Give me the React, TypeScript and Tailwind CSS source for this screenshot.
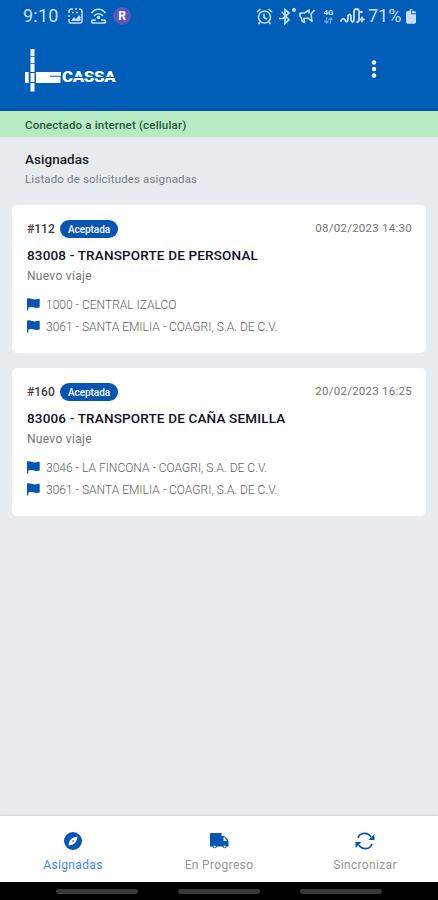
import React from 'react';

type Request = {
  id: string;
  date: string;
  title: string;
  stops: string[];
};

const requests: Request[] = [
  {
    id: '#112',
    date: '08/02/2023 14:30',
    title: '83008 - TRANSPORTE DE PERSONAL',
    stops: ['1000 - CENTRAL IZALCO', '3061 - SANTA EMILIA - COAGRI, S.A. DE C.V.'],
  },
  {
    id: '#160',
    date: '20/02/2023 16:25',
    title: '83006 - TRANSPORTE DE CAÑA SEMILLA',
    stops: ['3046 - LA FINCONA - COAGRI, S.A. DE C.V.', '3061 - SANTA EMILIA - COAGRI, S.A. DE C.V.'],
  },
];

function StatusBar() {
  return (
    <div className="flex h-8 items-center pl-[23px] pr-[22px] text-[#c9defa]">
      <span className="w-[37px] whitespace-nowrap text-[18px] leading-8 tracking-[0.2px]">9:10</span>
      <svg className="ml-2" width="15" height="16" viewBox="0 0 15 16" fill="none" stroke="currentColor" strokeWidth="1.5">
        <path d="M1 5V3.500C1 2 2 1 3.500 1H5M7 1h2M11 1c2 0 3 1 3 3v9c0 1-1 2-2 2H3c-1 0-2-1-2-2v-2M1 7v2" />
        <path d="M3 13l3-4 2 2 3-4 1.500 2V13z" fill="currentColor" stroke="none" />
        <path d="M4 4.500h2M8 4.500h2" />
      </svg>
      <svg className="ml-[7px]" width="17" height="16" viewBox="0 0 17 16" fill="none" stroke="currentColor" strokeWidth="1.700">
        <path d="M1.500 5c4-5 10-5 14 0M4 8c2.500-3 6.500-3 9 0" />
        <circle cx="8.500" cy="9.500" r="1.800" fill="currentColor" stroke="none" />
        <path d="M6 12H3.500C1 12 1 15 3.500 15h10c2.500 0 2.500-3 0-3H11" />
      </svg>
      <span className="ml-[6px] flex size-[18px] items-center justify-center rounded-full bg-[#5956bd] text-[12px] font-bold leading-none text-white">R</span>
      <div className="ml-auto flex items-center">
        <svg width="17" height="17" viewBox="0 0 17 17" fill="none" stroke="currentColor" strokeWidth="1.600">
          <circle cx="8.500" cy="9" r="6" />
          <path d="M8 5.500v4l3 1.700M1 4l3.500-3M16 4l-3.500-3M4 14l-1.500 2M13 14l1.500 2" />
        </svg>
        <svg className="ml-[4px]" width="20" height="18" viewBox="0 0 20 18" fill="none" stroke="currentColor" strokeWidth="1.700">
          <path d="M5 5l7 8-4 3.500v-14L12 6l-6 5.500H2" />
          <circle cx="17" cy="3" r="2" fill="currentColor" stroke="none" />
        </svg>
        <svg className="ml-[1px]" width="18" height="18" viewBox="0 0 18 18" fill="none" stroke="currentColor" strokeWidth="1.600" strokeLinejoin="round">
          <path d="M16.500 3L13 7l1 7.500-4-3.500-4 .5.500 4L4 14l-.5-3L2 9.500V6h4.500L11 3v3.500" />
        </svg>
        <span className="ml-[8px] flex w-[9px] flex-col items-center">
          <span className="text-[8px] font-bold leading-[8px]">4G</span>
          <svg width="9" height="7" viewBox="0 0 9 7" fill="none" stroke="#6da3e3" strokeWidth="1.300">
            <path d="M2.500 0v6M.5 4l2 2 2-2M6.500 7V1M4.500 3l2-2 2 2" />
          </svg>
        </span>
        <svg className="ml-[7px]" width="25" height="18" viewBox="0 0 25 18" fill="none" stroke="currentColor" strokeWidth="1.800" strokeLinecap="round" strokeLinejoin="round">
          <path d="M1 14q2-4 4-1 2 4 3-1V9q1.500-3 3 0v4q1.500 4 3 0V4.500q0-2.500 2.500-2.500T19 4.500V13q0 2-2 2" />
          <path d="M20 12.500h4M22 10.500v4M20 5h2" />
        </svg>
        <span className="ml-[3px] w-[35px] whitespace-nowrap text-[18px] leading-8">71%</span>
        <svg className="ml-[3px]" width="10" height="15" viewBox="0 0 11 16" fill="currentColor">
          <path d="M2 2h2V0h3v2h2c1 0 2 1 2 2v10c0 1-1 2-2 2H2c-1 0-2-1-2-2V4c0-1 1-2 2-2z" />
          <path d="M6 1v4h5" fill="none" stroke="#005eb8" />
        </svg>
      </div>
    </div>
  );
}

function Logo() {
  return (
    <div className="flex items-center text-white" aria-label="CASSA">
      <svg width="37" height="43" viewBox="0 0 37 43" fill="currentColor">
        <path d="M5.500 0h4v7.300h-4zM5.500 8h4v6.300h-4zM5.500 15h4v8h-4zM5.500 24h4v9h-4zM5.500 34h4v8.500h-4zM0 23h3.700v11H0zM11 23h25v3.700H25v1.100h10.500V34H11z" />
      </svg>
      <span className="relative mt-[15px] h-4 w-[54px]">
        <span className="block w-[46px] origin-left scale-x-[1.160] whitespace-nowrap text-[14.500px] font-black leading-4 tracking-[-0.300px]">CASSA</span>
        <span className="absolute left-[11px] top-[7px] h-px w-[44px] bg-[#005eb8]" />
      </span>
    </div>
  );
}

function Flag() {
  return (
    <svg width="13" height="13" viewBox="0 0 13 13" fill="#0755b3" className="shrink-0">
      <path d="M0 .5Q2-.2 4.500.7T9 1.300L12.700.7v8.800Q10 10.400 7 9.500T1.300 9.500V12.500H0z" />
    </svg>
  );
}

function Card({ item }: { item: Request }) {
  return (
    <article className="h-[148px] rounded-[5px] bg-white px-[15px] pt-[14px]">
      <div className="flex h-[19px] items-center">
        <span className="w-[33px] text-[12px] font-medium text-[#3c3c3c]">{item.id}</span>
        <span className="flex h-[18px] w-[58px] items-center justify-center rounded-full bg-[#0755b3] pt-px text-[10px] font-medium tracking-[-0.050px] text-white">Aceptada</span>
        <span className="-mr-px ml-auto text-[11.500px] tracking-[0.250px] text-[#757575]">{item.date}</span>
      </div>
      <h2 className="mt-2 whitespace-nowrap text-[13.500px] font-medium leading-[18px] tracking-[0.170px] text-[#10102a]">{item.title}</h2>
      <p className="mt-[4px] text-[12px] leading-[17px] tracking-[0.300px] text-[#757575]">Nuevo viaje</p>
      <ul className="mt-2">
        {item.stops.map((stop) => (
          <li key={stop} className="flex h-[22px] items-center gap-[6px]">
            <Flag />
            <span className="whitespace-nowrap pt-px text-[12px] font-light tracking-[0.010px] text-[#626262]">{stop}</span>
          </li>
        ))}
      </ul>
    </article>
  );
}

function CompassIcon() {
  return (
    <svg width="18" height="18" viewBox="0 0 18 18">
      <circle cx="9" cy="9" r="9" fill="#0755b3" />
      <path d="M13.500 4.500Q13 9 11 11T4.500 13.500Q5 9 7 7T13.500 4.500z" fill="white" />
      <circle cx="9" cy="9" r=".8" fill="#0755b3" />
    </svg>
  );
}

function TruckIcon() {
  return (
    <svg width="19" height="18" viewBox="0 0 19 18" fill="#0755b3">
      <path d="M1 1H11.500V4H14Q18 6 18.500 10v4.500H17a2.300 2.300 0 0 1-4.500 0H7a2.300 2.300 0 0 1-4.500 0H0V2Q0 1 1 1z" />
      <path d="M13.500 5.500v3.500h3.300q-.5-2-2-3.500z" fill="white" />
      <circle cx="4.700" cy="14.500" r="1" fill="white" />
      <circle cx="14.700" cy="14.500" r="1" fill="white" />
    </svg>
  );
}

function SyncIcon() {
  return (
    <svg width="20" height="18" viewBox="0 0 20 18" fill="none" stroke="#0755b3" strokeWidth="1.700">
      <path d="M3 6c2-6 10-6 13-1M17 12c-2 6-10 6-13 1" />
      <path d="M19.500 2v6h-6zM.5 16v-6h6z" fill="#0755b3" stroke="none" />
    </svg>
  );
}

function BottomNav() {
  return (
    <nav className="grid h-[66px] grid-cols-3 bg-white text-[12px] shadow-[0_-1px_2px_rgba(0,0,0,0.1)]">
      <div className="flex flex-col items-center pt-4 text-[#3d88e4]">
        <CompassIcon />
        <span className="mt-[7px] leading-4 tracking-[0.350px]">Asignadas</span>
      </div>
      <div className="flex flex-col items-center pt-4 text-[#969696]">
        <TruckIcon />
        <span className="mt-[7px] leading-4 tracking-[0.350px]">En Progreso</span>
      </div>
      <div className="flex flex-col items-center pt-4 text-[#969696]">
        <SyncIcon />
        <span className="mt-[7px] leading-4 tracking-[0.350px]">Sincronizar</span>
      </div>
    </nav>
  );
}

export default function App() {
  return (
    <div className="flex h-[900px] w-[438px] flex-col overflow-hidden bg-[#e8ecf1] font-[Roboto,sans-serif]">
      <header className="h-[111px] border-b-2 border-[#084eac] bg-[#005eb8]">
        <StatusBar />
        <div className="flex items-start justify-between pl-[24.500px] pr-[61px] pt-[17px]">
          <Logo />
          <svg className="mt-[11px]" width="6" height="18" viewBox="0 0 6 18" fill="white">
            <circle cx="3" cy="2.500" r="2.200" />
            <circle cx="3" cy="9" r="2.200" />
            <circle cx="3" cy="15.500" r="2.200" />
          </svg>
        </div>
      </header>
      <div className="h-[26px] bg-[#b7ebc4] pl-[25px] text-[11.500px] font-medium leading-[28px] tracking-[0.180px] text-[#275a35]">Conectado a internet (cellular)</div>
      <main className="flex-1">
        <div className="h-[68px] pl-[25px] pt-[13px]">
          <h1 className="text-[13.500px] font-medium leading-[18px] tracking-[0.050px] text-[#181b24]">Asignadas</h1>
          <p className="mt-[3px] text-[11.500px] leading-4 tracking-[0.150px] text-[#747b88]">Listado de solicitudes asignadas</p>
        </div>
        <div className="flex flex-col gap-[15px] px-3">
          {requests.map((item) => <Card key={item.id} item={item} />)}
        </div>
      </main>
      <BottomNav />
      <div className="flex h-[18px] items-center justify-center gap-[40px] bg-black">
        <span className="h-[5px] w-[82px] rounded-full bg-[#393939]" />
        <span className="h-[5px] w-[82px] rounded-full bg-[#393939]" />
        <span className="h-[5px] w-[82px] rounded-full bg-[#393939]" />
      </div>
    </div>
  );
}
